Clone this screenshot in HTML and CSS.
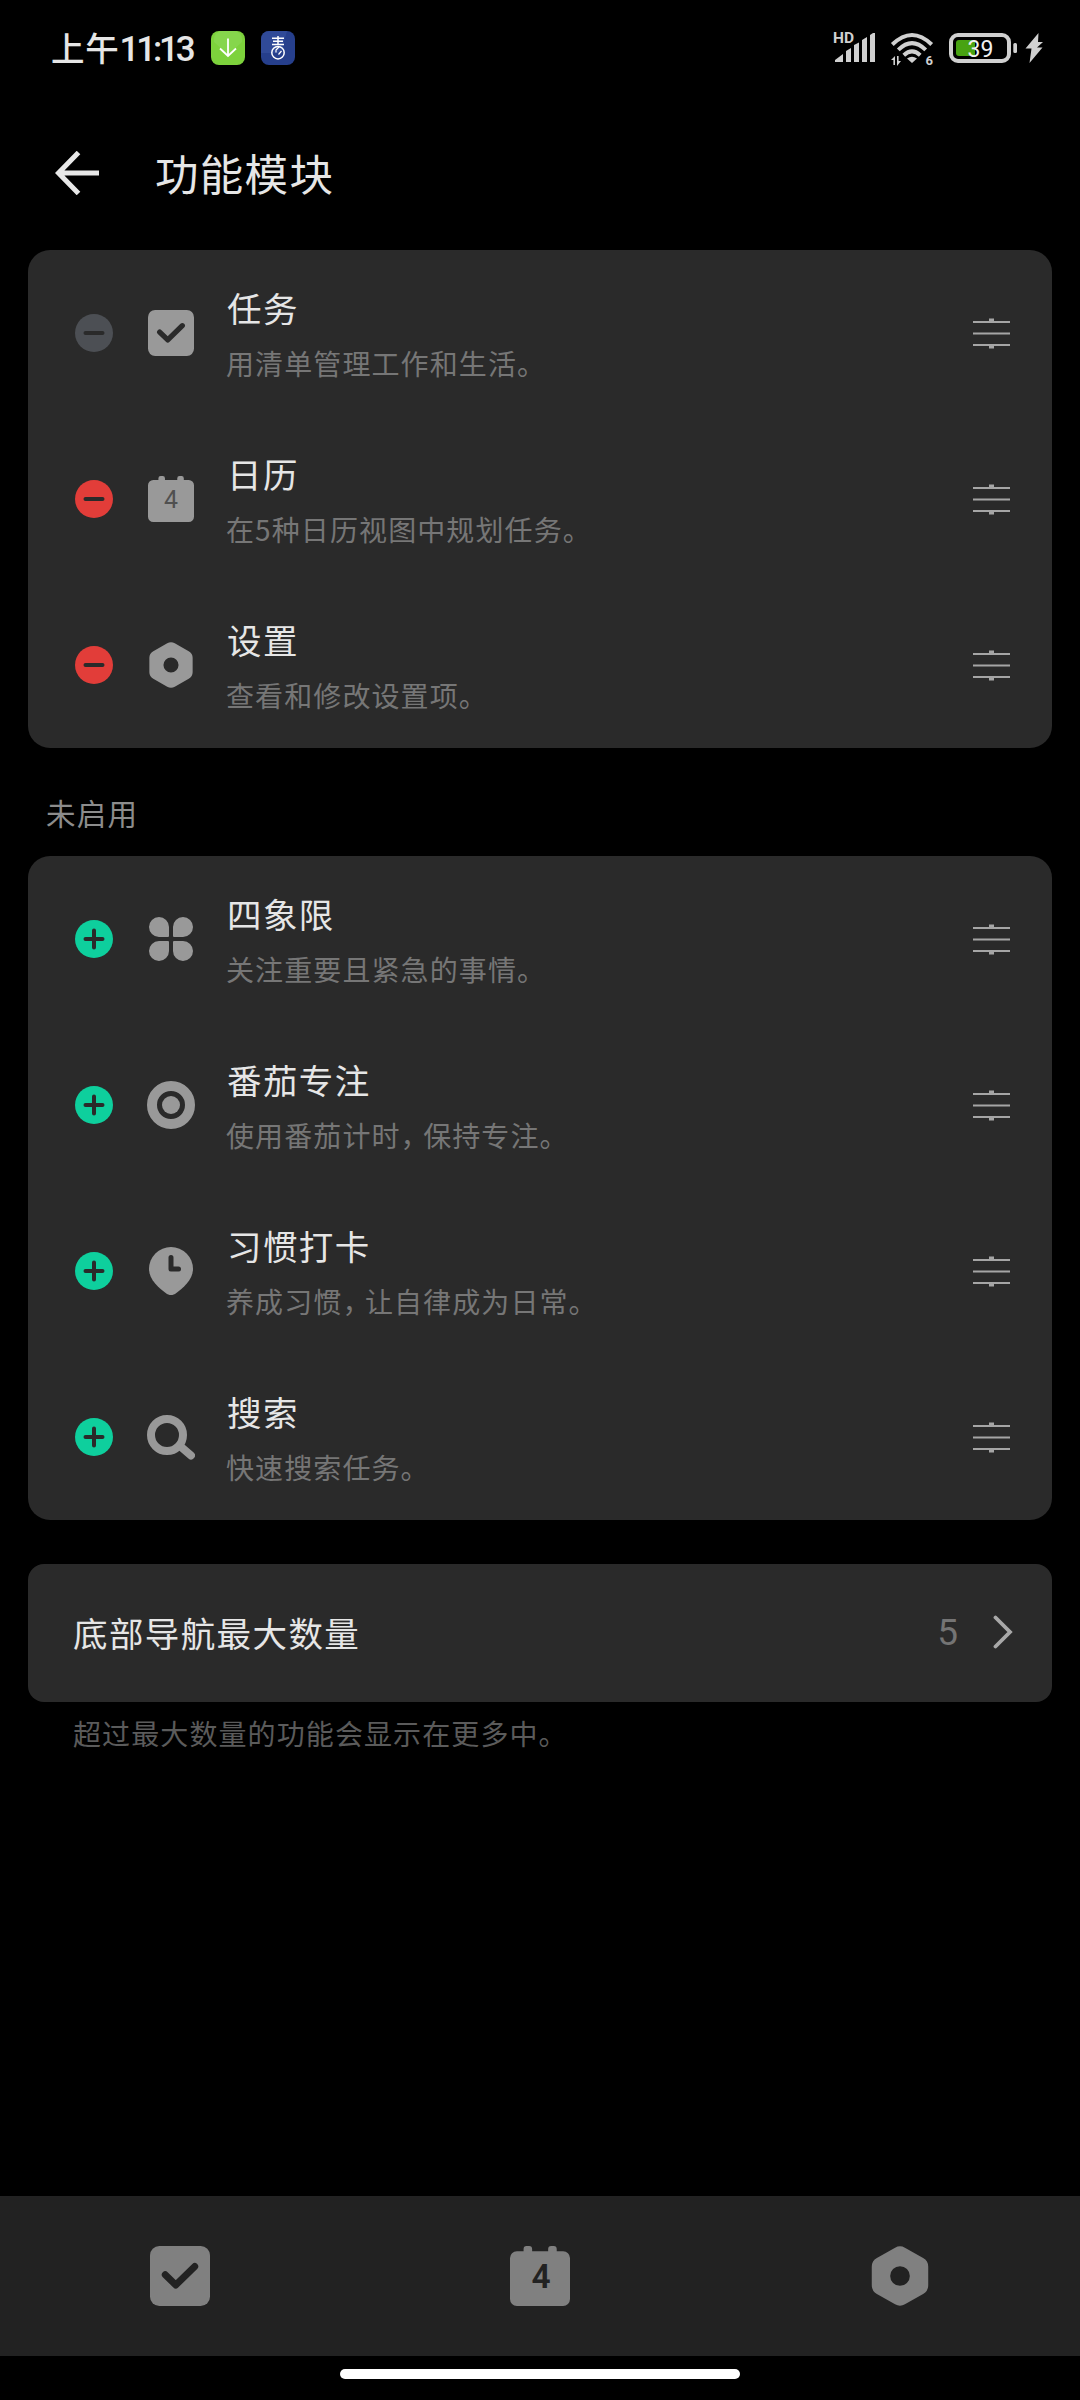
FILE: index.html
```html
<!DOCTYPE html>
<html lang="zh-CN">
<head>
<meta charset="utf-8">
<title>功能模块</title>
<link rel="stylesheet" href="styles.css">
</head>
<body>
<svg class="defs" aria-hidden="true">
  <symbol id="minus" viewBox="0 0 38 38">
    <circle cx="19" cy="19" r="19" fill="currentColor"/>
    <path class="sign" d="M10.5 19h17"/>
  </symbol>
  <symbol id="plus" viewBox="0 0 38 38">
    <circle cx="19" cy="19" r="19" fill="currentColor"/>
    <path class="sign" d="M10.5 19h17M19 10.5v17"/>
  </symbol>
  <symbol id="task" viewBox="0 0 61 61">
    <rect width="61" height="61" rx="9.5" fill="currentColor"/>
    <path class="cut" d="M15.5 29.2 26.2 39.7 45.5 20.8" stroke-width="7"/>
  </symbol>
  <symbol id="calendar" viewBox="0 0 61 61">
    <path fill="currentColor" d="M7 5.3h6.8V3a3 3 0 0 1 3-3h2.700a3 3 0 0 1 3 3v2.300h16.300V3a3 3 0 0 1 3-3h2.700a3 3 0 0 1 3 3v2.300H54a7 7 0 0 1 7 7V54a7 7 0 0 1-7 7H7a7 7 0 0 1-7-7V12.300a7 7 0 0 1 7-7z"/>
  </symbol>
  <symbol id="nut" viewBox="0 0 61 61">
    <path fill="currentColor" fill-rule="evenodd" d="M25.500 1.800a10 10 0 0 1 10 0L54 12.300a10 10 0 0 1 5.200 8.700V40a10 10 0 0 1-5.200 8.700L35.500 59.200a10 10 0 0 1-10 0L7 48.700A10 10 0 0 1 1.800 40V21A10 10 0 0 1 7 12.300zM30.500 20.500a10 10 0 1 0 0 20 10 10 0 0 0 0-20z"/>
  </symbol>
  <symbol id="clover" viewBox="0 0 48 48">
    <path fill="currentColor" d="M12 2a10 10 0 0 1 10 10v9a1 1 0 0 1-1 1h-9a10 10 0 0 1 0-20zM36 2a10 10 0 0 1 0 20h-9a1 1 0 0 1-1-1v-9A10 10 0 0 1 36 2zM12 26h9a1 1 0 0 1 1 1v9a10 10 0 1 1-10-10zM27 26h9a10 10 0 1 1-10 10v-9a1 1 0 0 1 1-1z"/>
  </symbol>
  <symbol id="target" viewBox="0 0 48 48">
    <circle cx="24" cy="24" r="19" fill="none" stroke="currentColor" stroke-width="10"/>
    <circle cx="24" cy="24" r="9" fill="currentColor"/>
  </symbol>
  <symbol id="pin" viewBox="0 0 48 48">
    <path fill="currentColor" d="M24 0a22 22 0 0 1 22 22c0 10-9 18.500-18 25-2.500 1.500-5.500 1.500-8 0C11 40.500 2 32 2 22A22 22 0 0 1 24 0z"/>
    <path class="cut" d="M24 10.500V22h7.500" stroke-width="5"/>
  </symbol>
  <symbol id="search" viewBox="0 0 48 48">
    <circle cx="20" cy="22" r="16" fill="none" stroke="currentColor" stroke-width="8"/>
    <path d="M33 33 44 42.500" stroke="currentColor" stroke-width="8" stroke-linecap="round"/>
  </symbol>
  <symbol id="grip" viewBox="0 0 37 32">
    <path fill="none" stroke="currentColor" stroke-width="2.200" d="M0 5h37M0 16.500h37M0 28h37"/>
    <path fill="currentColor" d="M16 1.500h5V5h-5zM16 28h5v3.500h-5z"/>
  </symbol>
</svg>

<header class="status">
  <span class="clock">上午<span class="digits">11:13</span></span>
  <svg class="app" viewBox="0 0 34 34">
    <rect width="34" height="34" rx="8" fill="#7dd23c"/>
    <path d="M3 11 17 24 31 11V8a8 8 0 0 0-8-8H11a8 8 0 0 0-8 8z" fill="#90d95b" opacity=".5"/>
    <path d="M17 7.500v17M9 17.500l8 7.500 8-7.500" fill="none" stroke="#fff" stroke-width="1.800"/>
  </svg>
  <svg class="app" viewBox="0 0 34 34">
    <rect width="34" height="34" rx="8" fill="#263f8c"/>
    <path d="M0 8a8 8 0 0 1 8-8h18l-6 22H0z" fill="#34509c" opacity=".7"/>
    <path d="M11 7.200h12M12 10.300h10M11 13.400h12M17 5v9" fill="none" stroke="#fff" stroke-width="1.500"/>
    <circle cx="17" cy="21.700" r="6.200" fill="none" stroke="#fff" stroke-width="1.500"/>
    <path d="M15 21.500v-2.500l3-3M17.500 23.500l3-3.500" fill="none" stroke="#fff" stroke-width="1.200"/>
  </svg>
  <svg class="radio" viewBox="830 26 220 44">
    <g fill="#d0d0d0">
      <text x="833" y="43" class="hd">HD</text>
      <path d="M835 62v-2l8-6v8zM846 62v-11l5-3v14zM854 62V45l5-2.500V62zM862 62V40l5-3v25zM870 62V35l3-2h2v29z"/>
      <path d="M907 58.500q5-3.500 10 0L912 63z"/>
      <path d="M891 60l4-4v9h-1.600v-5zM901 61l-4 5V56h1.600v5z"/>
      <text x="925.500" y="65" class="six">6</text>
      <rect x="1013.300" y="43" width="3.700" height="10" rx="1.500"/>
      <path d="M1038.500 33 1025.500 48.500h6L1029.500 63l13-15.500h-5.500l6-5.500h-5z"/>
    </g>
    <g fill="none" stroke="#d0d0d0">
      <path stroke-width="4" d="M892.300 44.500q19.700-19 39.400 0M898.300 49.800q13.700-13.500 27.400 0M903.800 55.200q8.200-7.500 16.400 0"/>
      <rect x="951" y="35" width="58" height="26" rx="7" stroke-width="4"/>
    </g>
    <path d="M959 40h16v16h-16a3 3 0 0 1-3-3V43a3 3 0 0 1 3-3z" fill="#48a312"/>
    <text x="980.500" y="57" class="charge">39</text>
  </svg>
</header>

<div class="titlebar">
  <svg class="back" viewBox="0 0 44 44"><path d="M23.500 1.500 3.500 22l20 20.500M4 22h40" fill="none" stroke="#e8e8e8" stroke-width="5"/></svg>
  <h1>功能模块</h1>
</div>

<main>
  <ul class="card">
    <li class="row">
      <svg class="toggle off"><use href="#minus"/></svg>
      <span class="icon"><svg class="glyph"><use href="#task"/></svg></span>
      <div class="text"><h2>任务</h2><p>用清单管理工作和生活。</p></div>
      <svg class="grip"><use href="#grip"/></svg>
    </li>
    <li class="row">
      <svg class="toggle remove"><use href="#minus"/></svg>
      <span class="icon"><svg class="glyph" viewBox="0 0 61 61"><use href="#calendar"/><text class="day" x="30.500" y="42.500">4</text></svg></span>
      <div class="text"><h2>日历</h2><p>在5种日历视图中规划任务。</p></div>
      <svg class="grip"><use href="#grip"/></svg>
    </li>
    <li class="row">
      <svg class="toggle remove"><use href="#minus"/></svg>
      <span class="icon"><svg class="glyph"><use href="#nut"/></svg></span>
      <div class="text"><h2>设置</h2><p>查看和修改设置项。</p></div>
      <svg class="grip"><use href="#grip"/></svg>
    </li>
  </ul>

  <h3 class="section">未启用</h3>

  <ul class="card">
    <li class="row">
      <svg class="toggle add"><use href="#plus"/></svg>
      <span class="icon"><svg class="glyph wide"><use href="#clover"/></svg></span>
      <div class="text"><h2>四象限</h2><p>关注重要且紧急的事情。</p></div>
      <svg class="grip"><use href="#grip"/></svg>
    </li>
    <li class="row">
      <svg class="toggle add"><use href="#plus"/></svg>
      <span class="icon"><svg class="glyph wide"><use href="#target"/></svg></span>
      <div class="text"><h2>番茄专注</h2><p>使用番茄计时<span class="comma">，</span>保持专注。</p></div>
      <svg class="grip"><use href="#grip"/></svg>
    </li>
    <li class="row">
      <svg class="toggle add"><use href="#plus"/></svg>
      <span class="icon"><svg class="glyph wide"><use href="#pin"/></svg></span>
      <div class="text"><h2>习惯打卡</h2><p>养成习惯<span class="comma">，</span>让自律成为日常。</p></div>
      <svg class="grip"><use href="#grip"/></svg>
    </li>
    <li class="row">
      <svg class="toggle add"><use href="#plus"/></svg>
      <span class="icon"><svg class="glyph wide"><use href="#search"/></svg></span>
      <div class="text"><h2>搜索</h2><p>快速搜索任务。</p></div>
      <svg class="grip"><use href="#grip"/></svg>
    </li>
  </ul>

  <div class="card limit">
    <h2>底部导航最大数量</h2>
    <span class="value">5</span>
    <svg class="chevron" viewBox="0 0 20 34"><path d="M2.500 2.500 17 17 2.500 31.500" fill="none" stroke="#a8a8a8" stroke-width="3.800" stroke-linecap="round"/></svg>
  </div>
  <p class="hint">超过最大数量的功能会显示在更多中。</p>
</main>

<nav class="tabs">
  <svg><use href="#task"/></svg>
  <svg viewBox="0 0 61 61"><use href="#calendar"/><text class="day" x="31.500" y="43">4</text></svg>
  <svg><use href="#nut"/></svg>
</nav>
<div class="gesture"><span></span></div>
</body>
</html>
```
FILE: styles.css
```css
* { box-sizing: border-box; margin: 0; padding: 0; }

body {
  width: 1080px;
  height: 2400px;
  display: flex;
  flex-direction: column;
  background: #000;
  color: #e6e6e6;
  font-family: "Noto Sans CJK SC", "Noto Sans", sans-serif;
  overflow: hidden;
}

ul { list-style: none; }
svg { display: block; flex: none; }
h1, h2, h3 { font-weight: 400; }
.defs { display: none; }

.sign { fill: none; stroke: #2a2a2a; stroke-width: 4; stroke-linecap: round; }
.cut { fill: none; stroke: var(--surface); stroke-linecap: round; stroke-linejoin: round; }

/* status bar */
.status {
  height: 96px;
  padding: 0 30px 0 51px;
  display: flex;
  align-items: center;
}
.clock {
  width: 160px;
  font-size: 33.5px;
  font-weight: 500;
  letter-spacing: 0.8px;
  line-height: 48px;
  white-space: nowrap;
}
.digits { font-family: Roboto, sans-serif; font-size: 35px; letter-spacing: -3.2px; }
.app { width: 34px; height: 34px; margin-right: 16px; }
.radio { width: 220px; height: 44px; margin-left: auto; }
.hd { font: 700 15.5px Roboto, sans-serif; }
.six { font: 700 13px Roboto, sans-serif; }
.charge { font: 400 23px Roboto, sans-serif; fill: #f0f0f0; text-anchor: middle; }

/* title bar */
.titlebar {
  height: 154px;
  padding: 0 55px;
  display: flex;
  align-items: center;
  gap: 56px;
}
.back { width: 44px; height: 44px; }
h1 { font-size: 43.5px; letter-spacing: 1.3px; line-height: 60px; margin-top: -1px; }

main { flex: 1; padding: 0 28px; }

.card { --surface: #2a2a2a; background: #2a2a2a; border-radius: 22px; }
.row {
  height: 166px;
  padding: 0 42px 0 47px;
  display: flex;
  align-items: center;
}
.toggle { width: 38px; height: 38px; }
.off { color: #4c4f54; }
.remove { color: #e23d39; }
.add { color: #0ecf9d; }
.icon { width: 48px; margin-left: 34px; display: flex; justify-content: center; color: #999; }
.glyph { width: 46px; height: 46px; overflow: visible; }
.glyph.wide { width: 48px; height: 48px; }
.day {
  font: 400 33px Roboto, sans-serif;
  fill: #505050;
  text-anchor: middle;
}
.text { flex: 1; margin-left: 31px; }
h2 { font-size: 34.5px; letter-spacing: 1.4px; line-height: 48px; }
.text h2 { padding-left: 1px; }
.text p {
  margin-top: 12px;
  font-size: 28px;
  letter-spacing: 1.1px;
  line-height: 40px;
  color: #767676;
}
.comma { letter-spacing: -5.5px; }
.grip { width: 37px; height: 32px; color: #a5a5a5; }

.section {
  height: 108px;
  padding: 43px 18px 0;
  font-size: 29.5px;
  letter-spacing: 1.3px;
  line-height: 42px;
  color: #8c8c8c;
}

.limit {
  height: 138px;
  margin-top: 44px;
  padding: 0 39px 2px 45px;
  display: flex;
  align-items: center;
  border-radius: 16px;
}
.value {
  margin-left: auto;
  margin-right: 35px;
  padding-top: 2px;
  font-family: Roboto, sans-serif;
  font-size: 37px;
  line-height: 48px;
  color: #747474;
}
.chevron { width: 20px; height: 34px; }
.hint {
  padding: 11px 45px;
  font-size: 28px;
  letter-spacing: 1.1px;
  line-height: 40px;
  color: #5b5b5b;
}

/* bottom navigation */
.tabs {
  --surface: #222;
  height: 160px;
  display: grid;
  grid-template-columns: repeat(3, 1fr);
  place-items: center;
  background: #222;
  color: #808080;
}
.tabs svg { width: 60px; height: 60px; }
.tabs .day { fill: #222; font-weight: 600; font-size: 34px; }
.gesture { height: 44px; display: flex; justify-content: center; padding-top: 13px; }
.gesture span { width: 400px; height: 10px; border-radius: 5px; background: #fff; }
```
